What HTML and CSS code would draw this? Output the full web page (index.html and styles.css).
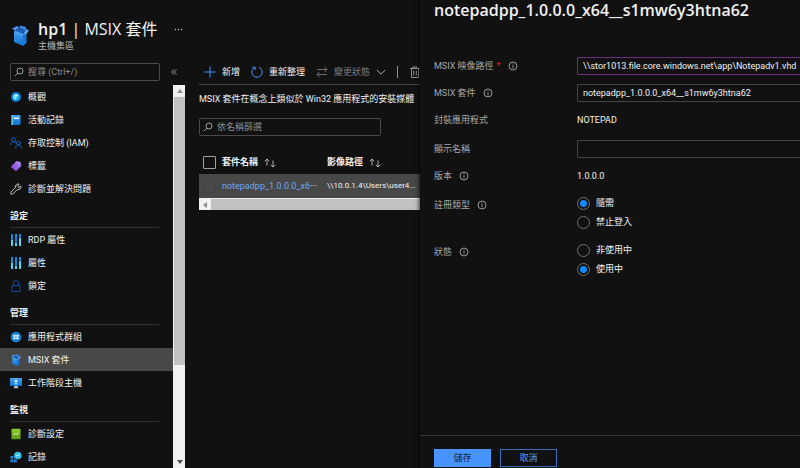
FILE: index.html
```html
<!DOCTYPE html>
<html lang="zh-Hant">
<head>
<meta charset="utf-8">
<meta name="viewport" content="width=device-width, initial-scale=1">
<title>hp1 | MSIX 套件</title>
<link rel="stylesheet" href="styles.css">
</head>
<body>
<svg class="defs" aria-hidden="true">
  <defs>
    <linearGradient id="blue" x1="0" y1="0" x2="0" y2="1"><stop offset="0" stop-color="#4aa5f2"/><stop offset="1" stop-color="#0f6fd0"/></linearGradient>
    <linearGradient id="purple" x1="1" y1="0" x2="0" y2="1"><stop offset="0" stop-color="#b48af5"/><stop offset="1" stop-color="#7a3fd6"/></linearGradient>
    <linearGradient id="green" x1="0" y1="0" x2="0" y2="1"><stop offset="0" stop-color="#8fd12f"/><stop offset="1" stop-color="#5a9c12"/></linearGradient>
    <symbol id="box" viewBox="0 0 17 21">
      <path d="M2 6l9 3v12l-9-4z" fill="url(#blue)"/>
      <path d="M11 9l3.500-3v12L11 21z" fill="#1a78dc"/>
      <path d="M3 5.500 8 3l6 2-3 4z" fill="#1560bd"/>
      <path d="M0 3.500 5 1l3 1.500L3 5.500z" fill="#4b92ea"/>
      <path d="M8 .5l6 1.500.5 3.500L8 3z" fill="#3a86e4"/>
      <path d="M14 4.500l3 .5-2 3.500-4 1z" fill="#5fa5f6"/>
      <path d="M2 6l1-.5L11 9v2z" fill="#5ba3f3"/>
    </symbol>
    <symbol id="search" viewBox="0 0 10 10"><circle cx="6" cy="4" r="3" fill="none" stroke="currentColor"/><path d="M4 6 .8 9.200" stroke="currentColor"/></symbol>
    <symbol id="sliders" viewBox="0 0 11 12">
      <path d="M1.500 0v12M5.500 0v12M9.500 0v12" stroke="#1787dc" stroke-width="2"/>
      <path d="M1.500 5v7M5.500 9v3M9.500 4v8" stroke="#4fd6f2" stroke-width="2"/>
      <path d="M0 5.500h3M4 8.500h3M8 3.500h3" stroke="#0c3c66" stroke-width=".6"/>
    </symbol>
    <symbol id="info" viewBox="0 0 10 10"><circle cx="5" cy="5" r="4" fill="none" stroke="currentColor" stroke-width=".9"/><path d="M5 4.300v3M5 2.500v1" stroke="currentColor" stroke-width=".9"/></symbol>
    <symbol id="sort" viewBox="0 0 12 10"><path d="M3 7.500V1M.7 3.300 3 1l2.300 2.300M9 2.500V9M6.700 6.700 9 9l2.300-2.300" fill="none" stroke="currentColor" stroke-width=".9"/></symbol>
  </defs>
</svg>
<div class="app">
  <main class="page">
    <header class="page-head">
      <svg class="page-icon"><use href="#box"/></svg>
      <div class="titles">
        <h1><b>hp1</b> | MSIX 套件</h1>
        <p>主機集區</p>
      </div>
      <button class="more" aria-label="更多">
        <svg viewBox="0 0 9 3"><circle cx="1.500" cy="1.500" r=".7"/><circle cx="4.500" cy="1.500" r=".7"/><circle cx="7.500" cy="1.500" r=".7"/></svg>
      </button>
    </header>
    <div class="columns">
      <aside class="sidebar">
        <div class="side-search">
          <label class="field"><svg class="i10"><use href="#search"/></svg><input type="text" placeholder="搜尋 (Ctrl+/)" aria-label="搜尋"></label>
          <button class="collapse" aria-label="摺疊"><svg viewBox="0 0 6 6"><path d="M3 .5.7 3 3 5.500M5.600.5 3.300 3l2.300 2.500" fill="none" stroke="currentColor" stroke-width=".8"/></svg></button>
        </div>
        <div class="menu-wrap">
          <nav class="menu">
            <a href="#"><svg viewBox="0 0 12 12"><circle cx="6" cy="6" r="5" fill="#0f7bd8"/><path d="M6 2.800 8.800 4.400v3.200L6 9.200 3.200 7.600V4.400z" fill="#37c5ee"/><path d="M6 2.800 8.800 4.400 6 6 3.200 4.400z" fill="#b5f1fb"/><path d="M6 6v3.200L3.200 7.600V4.400z" fill="#7fe3f6"/></svg>概觀</a>
            <a href="#"><svg viewBox="0 0 12 12"><rect x="1.500" y="1" width="9" height="10" rx="1" fill="url(#blue)"/><path d="M1.500 1h1.500v10H1.500z" fill="#62c8f5"/><path d="M4 3.500h5v1.500H4z" fill="#e8f7ff"/></svg>活動記錄</a>
            <a href="#"><svg viewBox="0 0 12 12"><g fill="none" stroke="#0f5fc0" stroke-width="1"><circle cx="3.500" cy="2.800" r="2"/><path d="M.5 8c0-4 5-4.200 6-1"/><circle cx="8.500" cy="6" r="1.900"/><path d="M5.500 11.500c0-4.500 6-4.500 6 0"/></g></svg>存取控制 (IAM)</a>
            <a href="#"><svg viewBox="0 0 12 12"><path d="M6.500 1 10.500 2l.8 4L6 11.300.8 7z" fill="url(#purple)"/><circle cx="9" cy="3.500" r=".6" fill="#d9c6ff"/></svg>標籤</a>
            <a href="#"><svg viewBox="0 0 12 12"><path d="M10.800 3 9 4.500 7.500 3.200 9 1.100C6.800.5 5 2.300 5.500 4.600L.9 9.200c-1 1.300.7 2.800 1.900 1.800L7.300 6.500C9.700 7 11.500 5.200 10.800 3z" fill="none" stroke="#d6d6d6" stroke-width=".9"/></svg>診斷並解決問題</a>
            <h2>設定</h2>
            <a href="#"><svg viewBox="0 0 11 12"><use href="#sliders"/></svg>RDP 屬性</a>
            <a href="#"><svg viewBox="0 0 11 12"><use href="#sliders"/></svg>屬性</a>
            <a href="#"><svg viewBox="0 0 12 12"><path d="M2 5.500h8v6H2zM3.500 5.500V3a2.500 2.500 0 0 1 5 0v2.500" fill="none" stroke="#0d489c"/></svg>鎖定</a>
            <h2>管理</h2>
            <a href="#"><svg viewBox="0 0 12 12"><circle cx="6" cy="6" r="5.300" fill="#1781d8"/><path d="M3.300 3.800h2.400v2H3.300zM6.200 3.800h2.500v2H6.200zM3.300 6.300h2.400v2H3.300zM6.200 6.300h2.500v2H6.200z" fill="#e6f7ff"/></svg>應用程式群組</a>
            <a href="#" class="active" aria-current="page"><svg viewBox="0 0 17 21"><use href="#box"/></svg>MSIX 套件</a>
            <a href="#"><svg viewBox="0 0 12 12"><rect x="0" y="1" width="12" height="8" rx=".5" fill="url(#blue)"/><path d="M4.500 9h3l1 2.200h-5z" fill="#b8c4cc"/><circle cx="6" cy="4" r="1.500" fill="#c8f4ff"/><path d="M4 7.500c0-2.500 4-2.500 4 0z" fill="#7fdcf7"/></svg>工作階段主機</a>
            <h2>監視</h2>
            <a href="#"><svg viewBox="0 0 12 12"><rect x="1.500" y=".8" width="9" height="10.500" rx=".8" fill="url(#green)"/><path d="M3.500 6.300h1.500l.8-.8.8.8L8.500 5" fill="none" stroke="#e9ffd0" stroke-width=".9"/></svg>診斷設定</a>
            <a href="#"><svg viewBox="0 0 12 12"><path d="M.5 5h2.800v2.800H.5zM.5 8.500h2.800v2.800H.5zM4 8.500h2.800v2.800H4z" fill="#1c85dc"/><circle cx="7.800" cy="4.500" r="3.800" fill="#35bfe6"/><path d="M6.200 5.500 7.300 4l1 .8L9.500 3" fill="none" stroke="#e8fbff" stroke-width=".9"/><path d="M4.500 5v2.500h2z" fill="#1c85dc"/></svg>記錄</a>
          </nav>
          <div class="vbar" aria-hidden="true"><span class="cap"><svg viewBox="0 0 6 4"><path d="M0 4 3 0l3 4z" fill="#8c8c8c"/></svg></span><span class="thumb"></span><span class="cap"><svg viewBox="0 0 6 4"><path d="M0 0h6L3 4z" fill="#4c4c4c"/></svg></span></div>
        </div>
      </aside>
      <section class="content">
        <div class="toolbar">
          <button><svg viewBox="0 0 12 12"><path d="M6 .5v11M.5 6h11" stroke="#4894fe"/></svg>新增</button>
          <button><svg viewBox="0 0 12 12"><path d="M4 1.300A5.200 5.200 0 1 0 8 1.300M1.500 1.200H4.200V4" fill="none" stroke="#4894fe"/></svg>重新整理</button>
          <button class="dim"><svg viewBox="0 0 12 12"><path d="M1 3.500h10M8.500 1 11 3.500 8.500 6M11 8.500H1M3.500 6 1 8.500 3.500 11" fill="none" stroke="currentColor" stroke-width=".9"/></svg>變更狀態<svg class="chev" viewBox="0 0 10 10"><path d="M.8 3 5 7.200 9.200 3" fill="none" stroke="#b4b4b4"/></svg></button>
          <span class="sep"></span>
          <button class="trash" aria-label="刪除"><svg viewBox="0 0 12 12"><path d="M1 2.500h10M4 2.500V1h4v1.500M2.500 2.500v9h7v-9M4.700 4.500v5M7.300 4.500v5" fill="none" stroke="#a0a0a0" stroke-width=".9"/></svg></button>
        </div>
        <p class="intro">MSIX 套件在概念上類似於 Win32 應用程式的安裝媒體</p>
        <label class="field filter"><svg class="i10"><use href="#search"/></svg><input type="text" placeholder="依名稱篩選" aria-label="依名稱篩選"></label>
        <table>
          <thead><tr><th class="pick"><input type="checkbox" aria-label="全選"></th><th class="name">套件名稱<svg class="sort"><use href="#sort"/></svg></th><th>影像路徑<svg class="sort"><use href="#sort"/></svg></th></tr></thead>
          <tbody><tr><td class="pick"><input type="checkbox" aria-label="選取 notepadpp"></td><td class="name"><a href="#">notepadpp_1.0.0.0_x6</a>···</td><td class="path">\\10.0.1.4\Users\user4...</td></tr></tbody>
        </table>
        <div class="hbar" aria-hidden="true"><span><svg viewBox="0 0 4 6"><path d="M4 0v6L0 3z" fill="#8c8c8c"/></svg></span></div>
      </section>
    </div>
  </main>
  <form class="panel">
    <h2>notepadpp_1.0.0.0_x64__s1mw6y3htna62</h2>
    <div class="rows">
      <div class="row"><label for="path">MSIX 映像路徑<em>*</em><svg><use href="#info"/></svg></label><input id="path" class="focus" type="text" value="\\stor1013.file.core.windows.net\app\Notepadv1.vhd"></div>
      <div class="row"><label for="pkg">MSIX 套件<svg><use href="#info"/></svg></label><input id="pkg" type="text" value="notepadpp_1.0.0.0_x64__s1mw6y3htna62"></div>
      <div class="row static"><span class="label">封裝應用程式</span><span>NOTEPAD</span></div>
      <div class="row"><label for="display">顯示名稱</label><input id="display" type="text"></div>
      <div class="row static"><span class="label">版本<svg><use href="#info"/></svg></span><span>1.0.0.0</span></div>
      <div class="row group" role="radiogroup" aria-labelledby="reg"><span class="label" id="reg">註冊類型<svg><use href="#info"/></svg></span>
        <div class="radios"><label><input type="radio" name="reg" checked>隨需</label><label><input type="radio" name="reg">禁止登入</label></div></div>
      <div class="row group" role="radiogroup" aria-labelledby="state"><span class="label" id="state">狀態<svg><use href="#info"/></svg></span>
        <div class="radios"><label><input type="radio" name="state">非使用中</label><label><input type="radio" name="state" checked>使用中</label></div></div>
    </div>
    <footer><button type="button" class="primary">儲存</button><button type="button">取消</button></footer>
  </form>
</div>
</body>
</html>
```
FILE: styles.css
```css
* { box-sizing: border-box; }
body {
  margin: 0;
  background: #111;
  color: #f2f2f2;
  font: 9px/14px Roboto, "Noto Sans CJK TC", sans-serif;
}
h1, h2, p { margin: 0; }
a { color: inherit; text-decoration: none; }
button, input { font: inherit; color: inherit; }
button { padding: 0; border: 0; background: none; display: flex; align-items: center; }
input { margin: 0; }
svg { display: block; flex: none; }
.defs { position: absolute; width: 0; height: 0; }
.app { display: grid; grid-template-columns: 420px minmax(0, 1fr); height: 100vh; overflow: hidden; }
.page { display: flex; flex-direction: column; min-height: 0; overflow: hidden; }

.page-head { display: flex; align-items: flex-start; padding: 19px 12px 10px; }
.page-icon { width: 17px; height: 21px; margin-top: 6px; }
.titles { margin-left: 9px; }
h1, .panel > h2 { font-family: "Open Sans", "Noto Sans CJK TC", sans-serif; font-size: 16px; line-height: 20px; }
h1 { font-weight: 400; }
h1 b { font-weight: 600; }
.titles p { color: #b8b8b8; line-height: 14px; }
.more { margin: 9px 0 0 17px; }
.more svg { width: 9px; height: 3px; fill: #ccc; }

.columns { display: flex; flex: 1; min-height: 0; }
.sidebar { width: 185px; display: flex; flex-direction: column; flex: none; }
.side-search { display: flex; align-items: center; gap: 11px; padding: 0 8px 4px 10px; }
.field { display: flex; align-items: center; gap: 4px; height: 18px; padding: 0 3px; border: 1px solid #4a4a4a; border-radius: 2px; color: #a0a0a0; }
.side-search .field { width: 150px; }
.field input { flex: 1; min-width: 0; padding: 0; border: 0; background: none; outline: 0; }
.field input::placeholder { color: #8c8c8c; opacity: 1; }
.i10 { width: 10px; height: 10px; }
.collapse svg { width: 6px; height: 6px; color: #bbb; }
.menu-wrap { display: flex; flex: 1; min-height: 0; }
.menu { flex: 1; overflow: hidden; }
.menu a { display: flex; align-items: center; gap: 6px; height: 23px; padding-left: 10px; }
.menu a svg { width: 12px; height: 12px; }
.menu .active { background: #484848; }
.menu h2 { height: 28px; margin: 0 14px 0 10px; padding-top: 9px; font-size: 9px; line-height: 14px; font-weight: 700; border-bottom: 1px solid #303030; }
.vbar { width: 12px; display: flex; flex-direction: column; background: #f1f1f1; border-left: 1px solid #f1f1f1; }
.cap { height: 12px; display: grid; place-items: center; }
.cap svg { width: 6px; height: 4px; }
.thumb { flex: 0 0 70%; margin-bottom: auto; background: #c1c1c1; }

.content { flex: 1; min-width: 0; padding-left: 14px; overflow: hidden; }
.toolbar { display: flex; align-items: center; height: 22px; padding: 0 0 4px 5px; margin-bottom: 7px; gap: 11px; border-bottom: 1px solid #484848; white-space: nowrap; }
.toolbar button { gap: 6px; flex: none; }
.toolbar svg { width: 12px; height: 12px; }
.toolbar .dim { color: #7c7c7c; }
.toolbar .chev { width: 10px; height: 10px; }
.sep { width: 1px; height: 12px; background: #909090; flex: none; }
.intro { white-space: nowrap; margin-bottom: 12px; }
.filter { width: 182px; }
table { width: 100%; margin-top: 14px; border-collapse: collapse; table-layout: fixed; white-space: nowrap; }
th, td { padding: 0; text-align: left; height: 24px; vertical-align: middle; }
th { font-weight: 700; }
.pick { width: 23px; padding-left: 4px; }
.name { width: 105px; }
.path { font-size: 8px; }
td a { color: #6ca6f5; }
tbody tr { background: #484848; }
.sort { display: inline-block; width: 12px; height: 10px; margin-left: 6px; vertical-align: middle; color: #c0c0c0; }
input[type="checkbox"] { appearance: none; display: block; width: 13px; height: 13px; border: 1px solid #a0a0a0; border-radius: 1px; }
tbody input[type="checkbox"] { border-color: #414141; }
.hbar { height: 12px; background: #c1c1c1; border-top: 1px solid #f1f1f1; }
.hbar span { display: grid; place-items: center; width: 12px; height: 100%; background: #f1f1f1; }
.hbar svg { width: 4px; height: 6px; }

.panel { display: flex; flex-direction: column; min-width: 0; min-height: 0; background: #111; box-shadow: 0 0 5px #000; z-index: 1; overflow: hidden; }
.panel > h2 { padding: 0 14px; font-weight: 600; white-space: nowrap; }
.rows { display: flex; flex-direction: column; gap: 9px; padding: 37px 0 0 14px; flex: 1; }
.row { display: grid; grid-template-columns: 143px minmax(0, 1fr); line-height: 18px; }
.row > label, .label { display: flex; align-items: center; height: 18px; color: #a6a6a6; }
.row svg { width: 10px; height: 10px; margin-left: 7px; }
em { color: #e0202c; font-style: normal; margin-left: 3px; }
.row > input { width: 100%; height: 18px; padding: 0 0 0 5px; background: none; border: 1px solid #444; border-right: 0; border-radius: 2px 0 0 2px; outline: 0; }
.row > .focus { border-color: #6d2b83; }
.static { padding-bottom: 2px; }
.group { padding-bottom: 5px; }
.radios { display: flex; flex-direction: column; gap: 5px; line-height: 14px; }
.radios label { display: flex; align-items: center; gap: 6px; height: 14px; }
input[type="radio"] { appearance: none; width: 13px; height: 13px; border: 1px solid #707070; border-radius: 50%; }
input[type="radio"]:checked { background: radial-gradient(circle, #0f8bff 3px, transparent 4px); }
footer { display: flex; gap: 9px; height: 33px; padding: 13px 14px 0; border-top: 1px solid #343434; }
footer button { justify-content: center; width: 57px; height: 18px; border: 1px solid #3670bd; color: #5a9cf5; }
footer .primary { background: #4894fe; border-color: #4894fe; color: #10203a; }
```
